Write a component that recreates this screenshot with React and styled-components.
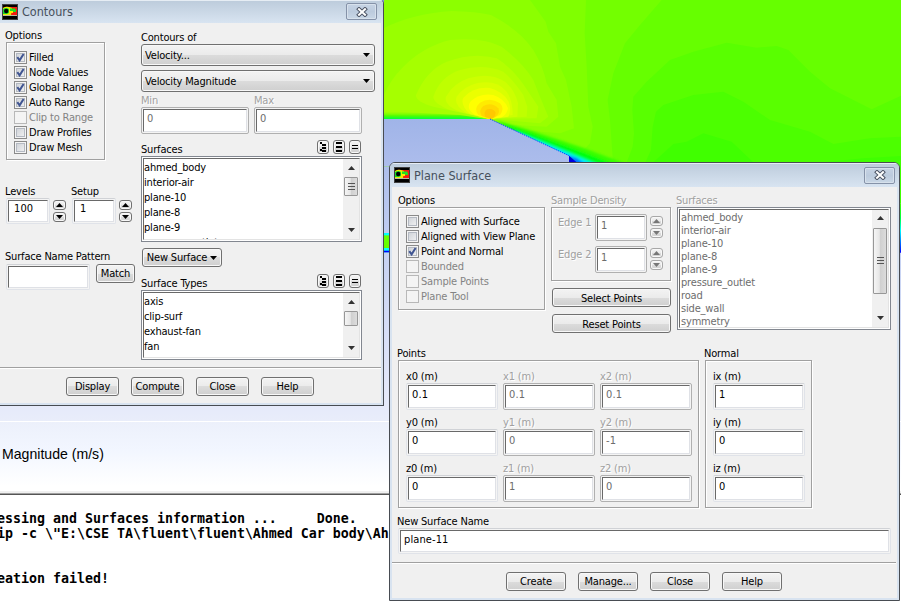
import React from 'react';
import styled, { createGlobalStyle, css } from 'styled-components';

const Global = createGlobalStyle`
  * { box-sizing: border-box; }
  body { margin: 0; overflow: hidden; background: #fff; }
  #root { font-family: 'DejaVu Sans Condensed', 'DejaVu Sans', Tahoma, sans-serif; font-stretch: condensed; font-size: 11px; line-height: 13px; color: #000; letter-spacing: -0.18px; }
`;

const Desktop = styled.div`
  position: relative; width: 901px; height: 602px; overflow: hidden; background: #fff;
`;
const Viewport = styled.div`
  height: 491px;
  background: linear-gradient(#8098dc 0, #a0b4e8 120px, #c6d2f3 260px, #e4e9fa 400px, #e9edfa 421px, #fff 421px, #fff 422px, #ecf0fb 422px, #f2f6ff 450px, #fff 486px);
`;
const Flow = styled.svg`position: absolute; left: 384px; top: 0; display: block;`;
const Legend = styled.div`
  position: absolute; left: 2px; top: 446px; font: 14.1px/17px 'Liberation Sans', Arial, sans-serif; letter-spacing: 0; white-space: nowrap;
`;
const Console = styled.pre`
  margin: 0; height: 111px; padding: 18px 0 0; border-top: 2px solid #f0f0f0; overflow: hidden;
  box-shadow: inset 0 1px #a0a0a0, inset 0 2px #555;
  font: bold 13.29px/15px 'DejaVu Sans Mono', monospace; letter-spacing: 0;
  & > span { display: block; margin-left: -3px; }
`;

const Window = styled.section`
  position: absolute; left: ${p => p.$x}px; top: ${p => p.$y}px; width: ${p => p.$w}px; height: ${p => p.$h}px;
  border: 1px solid #484c52; border-radius: ${p => (p.$cut ? '0 5px 0 0' : '6px 6px 0 0')};
  background: #d8e3f0; padding: 0 2px 2px ${p => (p.$cut ? 0 : 2)}px;
  ${p => p.$cut && css`border-left: 0; border-top-color: #b8c4d2;`}
  display: flex; flex-direction: column; overflow: hidden;
`;
const TitleBar = styled.header`
  flex: none; height: ${p => p.$h}px; margin: 0 -2px; padding: 0 4px 0 ${p => p.$pl}px; display: flex; align-items: center;
  background: linear-gradient(#bccbdb, #d8e4f1);
  box-shadow: inset 0 1px #e6edf4;
`;
const Title = styled.h1`
  margin: 1px auto 0 4px; font: 12.5px/16px 'DejaVu Sans Condensed', 'DejaVu Sans', sans-serif; font-stretch: condensed; letter-spacing: 0; color: #46505c;
`;
const CloseBox = styled.button`
  width: 31px; height: 17px; padding: 0; display: grid; place-items: center; border: 1px solid #8592a8; border-radius: 2px;
  background: linear-gradient(#c6d3e4, #bccbdd 50%, #c9d7e6); box-shadow: inset 0 0 0 1px #d7e1ec; margin-right: ${p => p.$mr || 0}px;
`;
const Body = styled.div`flex: 1; background: #f0f0f0; display: flex; flex-direction: column;`;
const Panel = styled.div`display: flex; height: ${p => p.$h}px; flex: none; padding-left: ${p => p.$pl}px;`;
const Column = styled.div`flex: none; width: ${p => p.$w}px; display: flex; flex-direction: column; align-items: flex-start;`;
const Row = styled.div`display: flex; align-items: flex-start; gap: ${p => p.$gap || 0}px; margin-top: ${p => p.$mt || 0}px; margin-left: ${p => p.$ml || 0}px; height: ${p => (p.$h ? p.$h + 'px' : 'auto')};`;

const Label = styled.div`
  flex: none; height: 13px; line-height: 13px; white-space: nowrap; margin-top: ${p => p.$mt || 0}px; margin-left: ${p => p.$ml || 0}px; width: ${p => (p.$w ? p.$w + 'px' : 'auto')};
  ${p => p.$off && css`color: #a0a0a0; text-shadow: 1px 1px #fff;`}
`;
const Group = styled.div`
  flex: none; width: ${p => p.$w}px; height: ${p => p.$h}px; margin-left: ${p => p.$ml || 0}px; padding: ${p => p.$p}; border: 1px solid #a0a0a0;
  box-shadow: 1px 1px #fff, inset 1px 1px #fff;
`;
const CheckRow = styled.label`
  display: flex; align-items: center; gap: 2px; height: 15px; white-space: nowrap; color: ${p => (p.$off ? '#838383' : '#000')};
`;
const CheckBox = styled.span`
  width: 13px; height: 13px; display: grid; place-items: center; border: 1px solid ${p => (p.$off ? '#b8b8b8' : '#8a8a8a')};
  background: ${p => (p.$off ? '#f4f4f4' : 'linear-gradient(135deg, #c9cdd3, #f6f6f6)')};
  box-shadow: inset 0 0 0 1px #f4f4f4, inset 0 0 0 2px ${p => (p.$off ? '#f4f4f4' : '#b4b9c2')};
`;
const FieldFrame = styled.div`
  flex: none; width: ${p => p.$w}px; height: ${p => p.$h || 27}px; padding: 1px; border: 1px solid ${p => (p.$off ? '#b0b0b0' : '#e0e3e9')}; border-radius: 2px; background: #f4f4f4;
  ${p => !p.$off && css`border-top-color: #d0d2d6;`}
`;
const FieldInner = styled.div`
  height: 100%; border: 1px solid; border-color: #696969 #dfe1e6 #dfe1e6 #696969; background: #fff; padding: 0 0 0 ${p => p.$pl || 3}px; line-height: ${p => p.$lh || 17}px;
  color: ${p => (p.$off ? '#6d6d6d' : '#000')}; white-space: nowrap; letter-spacing: 0.1px;
`;
const Btn = styled.button`
  flex: none; width: ${p => p.$w}px; height: ${p => p.$h || 19}px; margin: ${p => p.$m || 0}; padding: ${p => p.$p || 0}; display: flex; align-items: center; justify-content: ${p => p.$jc || 'center'}; gap: 3px;
  border: 1px solid ${p => (p.$off ? '#a8a8a8' : '#707070')}; border-radius: 3px; font: inherit; letter-spacing: inherit; color: #000; white-space: nowrap;
  background: linear-gradient(#f3f3f3, #ebebeb 50%, #dcdcdc 50%, #cfcfcf); box-shadow: inset 0 0 0 1px #f8f8f8;
`;
const Steps = styled.div`display: flex; flex-direction: column; gap: 2px; margin: 2px 0 0 3px;`;
const ListBox = styled.div`
  flex: none; display: flex; width: ${p => p.$w}px; height: ${p => p.$h}px; border: 1px solid #828790; background: #fff; padding: 1px;
`;
const ListInner = styled.div`flex: 1; display: flex; border: 1px solid; border-color: #696969 #e3e3e3 #e3e3e3 #696969; overflow: hidden;`;
const Items = styled.div`
  flex: 1; padding: ${p => p.$pt}px 0 0 ${p => p.$pl || 0}px; overflow: hidden; color: ${p => (p.$off ? '#6d6d6d' : '#000')};
  & > div { height: ${p => p.$rh}px; line-height: ${p => p.$rh}px; white-space: nowrap; }
`;
const ScrollBar = styled.div`
  width: 16px; background: #f0f0f0; display: flex; flex-direction: column; align-items: center; padding: ${p => p.$p};
`;
const Thumb = styled.div`
  width: 14px; height: ${p => p.$h}px; margin: ${p => p.$mt}px 0 auto; display: grid; place-items: center; border: 1px solid #979797; border-radius: 1px;
  background: linear-gradient(90deg, #f5f5f5, #e6e6e6 45%, #cfcfcf 50%, #dcdcdc);
`;
const Rule = styled.div`flex: none; height: 2px; margin-right: ${p => p.$mr || 0}px; background: linear-gradient(#a0a0a0 50%, #fff 50%);`;
const Footer = styled.footer`display: flex; gap: 12px; padding: 8px 0 0 ${p => p.$pl}px;`;
const Grid = styled.div`display: grid; grid-template-columns: repeat(${p => p.$n}, 92px); gap: 6px 5px;`;

const Arrow = ({ up, color = '#000', w = 7, h = 4 }) => (
  <svg width={w} height={h} viewBox="0 0 8 4" preserveAspectRatio="none"><path d={up ? 'M0 4L4 0L8 4Z' : 'M0 0L4 4L8 0Z'} fill={color} /></svg>
);
const AppIcon = () => (
  <svg width="16" height="16" viewBox="0 0 16 16">
    <rect width="16" height="16" fill="#404040" /><rect x="1" y="1" width="14" height="14" fill="#000" />
    <path d="M1 4q3-2 6-1h8v8H1z" fill="#f41a10" />
    <path d="M1 4q3-2 6-1l3 1-1 7H1z" fill="#e8f000" /><path d="M1 5q3-2 6 0v4L5 10H1z" fill="#16d828" />
    <circle cx="4.2" cy="7" r="2.2" fill="#000" /><path d="M8 4.5h5l1 1.5v2H8z" fill="#20e020" /><path d="M7 7h4v2H7z" fill="#ffe600" />
    <path d="M1 11h14v1H1z" fill="#b8b8a0" />
  </svg>
);
const CloseIcon = () => (
  <svg width="12" height="10" viewBox="0 0 12 10">
    <path d="M3 2.2L9 7.8M9 2.2L3 7.8" stroke="#4e5666" strokeWidth="4" strokeLinecap="square" />
    <path d="M3 2.2L9 7.8M9 2.2L3 7.8" stroke="#fff" strokeWidth="2" strokeLinecap="square" />
  </svg>
);
const CheckMark = () => (
  <svg width="9" height="9" viewBox="0 0 9 9"><path d="M1.3 4.2L3.6 7.4L7.6 1" fill="none" stroke="#405592" strokeWidth="2" /></svg>
);
const Check = ({ on, off, children }) => (
  <CheckRow $off={off}><CheckBox $off={off}>{on && <CheckMark />}</CheckBox>{children}</CheckRow>
);
const Field = ({ w, h, off, lh, pl, children }) => (
  <FieldFrame $w={w} $h={h} $off={off}><FieldInner $off={off} $lh={lh} $pl={pl}>{children}</FieldInner></FieldFrame>
);
const Spinner = ({ off }) => (
  <Steps>
    <Btn $w={13} $h={10} $off={off}><Arrow up color={off ? '#777' : '#000'} /></Btn>
    <Btn $w={13} $h={10} $off={off}><Arrow color={off ? '#777' : '#000'} /></Btn>
  </Steps>
);
const listIcons = ['M2 1h2v2H2zM4 3h4v2H4zM4 6h4v2H4zM2 8h2v2H2zM4 9h4v2H4z', 'M2 1h6v2H2zM2 5h6v2H2zM2 9h6v2H2z', 'M2 4h6v1H2zM2 7h6v1H2z'];
const ListTools = () => listIcons.map(d => (
  <Btn key={d} $w={12} $h={14}><svg width="10" height="12" viewBox="0 0 10 12"><path d={d} fill="#000" /></svg></Btn>
));
const Grip = () => <svg width="7" height="8" viewBox="0 0 7 8"><path d="M0 .5h7M0 3.5h7M0 6.5h7" stroke="#555" /></svg>;

const List = ({ w, h, rh, pt, pl, off, items, thumb, gap, grip, sp }) => (
  <ListBox $w={w} $h={h}><ListInner>
    <Items $rh={rh} $pt={pt} $pl={pl} $off={off}>{items.map(t => <div key={t}>{t}</div>)}</Items>
    <ScrollBar $p={sp}><Arrow up color="#333" /><Thumb $h={thumb} $mt={gap}>{grip && <Grip />}</Thumb><Arrow color="#333" /></ScrollBar>
  </ListInner></ListBox>
);
const Select = ({ children, m }) => <Btn $w={234} $h={22} $jc="space-between" $p="0 4px 0 3px" $m={m}>{children}<Arrow /></Btn>;

const bands = [
  ['#73ff00', 'M12 0H845L780 75L735 130L700 220L683 300L690 360L700 500H12Z'],
  ['#80ff00', 'M12 0H618L614 100L620 200L625 320L638 380L630 430L560 500H12Z'],
  ['#8cff00', 'M12 0H450L497 65L505 95L528 130L540 200L558 240L575 320L582 385L540 400L12 357Z'],
  ['#99ff00', 'M12 84Q100 40 215 33Q290 35 333 45Q420 90 460 150Q490 200 500 250L530 300L535 350L500 380L12 357Z'],
  ['#a6ff00', 'M12 285Q30 240 70 200Q130 140 210 120Q310 110 365 140Q430 190 460 240L480 290L505 350L480 370L330 357L12 345Z'],
  ['#b3ff00', 'M160 320Q106 305 108 285Q140 210 200 185Q280 155 350 175Q400 205 445 275L475 320L470 355L330 357Z'],
  ['#bfff00', 'M210 330Q160 310 160 290Q180 230 240 210Q310 190 370 215Q400 240 430 285L442 320L440 350L330 357Z'],
  ['#ccff00', 'M240 335Q190 315 198 290Q220 250 265 235Q330 215 375 245Q405 270 414 310L412 350L330 357Z'],
  ['#d9ff00', 'M260 340Q220 315 230 290Q250 260 290 250Q350 238 380 275Q398 300 398 345L330 357Z'],
  ['#ebff00', 'M270 342Q240 315 250 293Q280 260 330 264Q370 275 386 305Q395 330 385 350L330 357Z'],
  ['#ffff00', 'M285 345Q255 325 273 303Q300 278 340 285Q375 297 384 325Q380 345 365 352L330 357Z'],
  ['#ffec00', 'M295 345Q280 325 300 308Q330 290 360 310Q375 325 360 345L330 357Z'],
  ['#ffd900', 'M305 348Q295 330 310 318Q335 305 355 325Q362 340 345 352L330 357Z'],
  ['#ffc800', 'M315 350Q310 335 322 328Q340 323 347 338Q345 352 335 357Z'],
  ['#59ff00', 'M760 290L800 245L870 180L940 155L1040 128L1130 143L1190 138L1225 150L1290 215L1350 265L1475 328L1563 287V500H735L758 440L762 400L757 330Z'],
  ['#4cff00', 'M828 335L850 315L940 285L1030 275L1090 305L1170 360L1290 395L1360 432L1470 415L1563 410V500H790L813 450L818 380Z'],
  ['#40ff00', 'M820 487L880 432L920 425L970 400L1055 425L1120 487Z'],
  ['#40ff00', 'M1330 487L1450 475L1563 468V500H1330Z'],
];
const FlowField = () => (
  <Flow width="517" height="260" viewBox="12 0 1551 780">
    <defs>
      <linearGradient id="wall" x1="0" y1="0" x2="0" y2="1"><stop offset="0" stopColor="#8cff00" stopOpacity="0" /><stop offset=".6" stopColor="#50ff00" /><stop offset="1" stopColor="#00ff40" /></linearGradient>
      <linearGradient id="edge" x1="0" y1="0" x2="0" y2="1"><stop offset="0" stopColor="#40ff00" /><stop offset=".3" stopColor="#00ff40" /><stop offset=".55" stopColor="#00ffff" /><stop offset="1" stopColor="#0000ff" /></linearGradient>
      <linearGradient id="body" x1="0" y1="0" x2="0" y2="1"><stop offset="0" stopColor="#a0b4e8" /><stop offset="1" stopColor="#adbdec" /></linearGradient>
      <filter id="soft"><feGaussianBlur stdDeviation="3" /></filter>
    </defs>
    <path d="M12 0H1563V500H12Z" fill="#66ff00" />
    {bands.map(([fill, d]) => <path key={d} d={d} fill={fill} />)}
    <path d="M12 333L240 345L320 357H12Z" fill="url(#wall)" />
    <g filter="url(#soft)">
      <path d="M345 360L440 388L600 440L740 492H560Z" fill="#38ff00" />
      <path d="M355 366L460 402L600 453L700 492H560Z" fill="#00ff10" />
      <path d="M400 390L480 421L570 457L655 492H560Z" fill="#00ffa0" />
      <path d="M400 392L480 425L570 462L640 492H560Z" fill="#00e8ff" />
      <path d="M567 467L590 474L615 492H560Z" fill="#0080ff" />
    </g>
    <path d="M567 467L590 487H567Z" fill="#0000e0" />
    <path d="M12 357H330L567 467V500H12Z" fill="url(#body)" />
    <path d="M330 357L567 467" stroke="#0048ff" strokeWidth="3" strokeDasharray="4 3" />
    <path d="M1557 500H1563V610H1557Z" fill="#40ff00" />
    <path d="M1557 610H1563V758H1557Z" fill="url(#edge)" />
    <path d="M12 699H40V757H12Z" fill="#00ffff" />
    <path d="M12 706H40V744H12Z" fill="#66ff00" />
    <path d="M12 752H40V757H12Z" fill="#0000ff" />
  </Flow>
);

const ContoursWindow = () => (
  <Window $x={0} $y={-1} $w={384} $h={407} $cut>
    <TitleBar $h={23} $pl={4}><AppIcon /><Title>Contours</Title><CloseBox $mr={2}><CloseIcon /></CloseBox></TitleBar>
    <Body>
      <Panel $pl={5} $h={344}>
        <Column $w={136}>
          <Label $mt={6}>Options</Label>
          <Group $w={99} $h={118} $ml={1} $p="7px 0 0 7px">
            <Check on>Filled</Check><Check on>Node Values</Check><Check on>Global Range</Check><Check on>Auto Range</Check>
            <Check off>Clip to Range</Check><Check>Draw Profiles</Check><Check>Draw Mesh</Check>
          </Group>
          <Row $mt={25}><Label $w={66}>Levels</Label><Label>Setup</Label></Row>
          <Row $ml={1}>
            <Field w={44} h={26} lh={16} pl={5}>100</Field><Spinner />
            <Row $ml={6}><Field w={44} h={26} lh={16} pl={5}>1</Field><Spinner /></Row>
          </Row>
          <Label $mt={26}>Surface Name Pattern</Label>
          <Row $mt={1} $gap={6} $ml={1}><Field w={84} h={26} /><Btn $w={39}>Match</Btn></Row>
        </Column>
        <Column $w={234}>
          <Label $mt={8}>Contours of</Label>
          <Select>Velocity...</Select>
          <Select m="4px 0 0">Velocity Magnitude</Select>
          <Row $mt={2} $gap={5}><Label $off $w={108}>Min</Label><Label $off>Max</Label></Row>
          <Row $gap={5}><Field w={108} off>0</Field><Field w={108} off>0</Field></Row>
          <Row $mt={6} $gap={4} $h={16}><Label $w={172} $mt={3}>Surfaces</Label><ListTools /></Row>
          <List w={221} h={86} rh={15} pt={1} items={['ahmed_body', 'interior-air', 'plane-10', 'plane-8', 'plane-9', 'pressure_outlet']} thumb={19} gap={7} grip sp="7px 0" />
          <Btn $w={80} $m="6px 0 0 1px">New Surface<Arrow /></Btn>
          <Row $mt={7} $gap={4} $h={16}><Label $w={172} $mt={3}>Surface Types</Label><ListTools /></Row>
          <List w={221} h={70} rh={15} pt={1} items={['axis', 'clip-surf', 'exhaust-fan', 'fan', 'fluid']} thumb={15} gap={7} sp="7px 0" />
        </Column>
      </Panel>
      <Rule />
      <Footer $pl={66}><Btn $w={53}>Display</Btn><Btn $w={53}>Compute</Btn><Btn $w={53}>Close</Btn><Btn $w={53}>Help</Btn></Footer>
    </Body>
  </Window>
);

const Cell = ({ name, value, off }) => (
  <div><Label $off={off}>{name}</Label><Field w={92} off={off}>{value}</Field></div>
);
const PlaneWindow = () => (
  <Window $x={389} $y={162} $w={511} $h={439}>
    <TitleBar $h={24} $pl={4}><AppIcon /><Title>Plane Surface</Title><CloseBox><CloseIcon /></CloseBox></TitleBar>
    <Body>
      <Panel $pl={6} $h={160}>
        <Column $w={153}>
          <Label $mt={7}>Options</Label>
          <Group $w={147} $h={103} $p="6px 0 0 7px">
            <Check>Aligned with Surface</Check><Check>Aligned with View Plane</Check><Check on>Point and Normal</Check>
            <Check off>Bounded</Check><Check off>Sample Points</Check><Check off>Plane Tool</Check>
          </Group>
        </Column>
        <Column $w={126}>
          <Label $mt={7} $off>Sample Density</Label>
          <Row><Group $w={120} $h={74} $p="6px 0 0 6px">
            <Row><Label $off $w={37} $mt={2}>Edge 1</Label><Field w={52} off>1</Field><Spinner off /></Row>
            <Row $mt={5}><Label $off $w={37} $mt={2}>Edge 2</Label><Field w={52} off>1</Field><Spinner off /></Row>
          </Group></Row>
          <Btn $w={119} $m="7px 0 0 1px" $p="1px 0 0">Select Points</Btn>
          <Btn $w={119} $m="7px 0 0 1px" $p="1px 0 0">Reset Points</Btn>
        </Column>
        <Column $w={214}>
          <Label $mt={7} $ml={-1} $off>Surfaces</Label>
          <List w={214} h={123} rh={13} pt={1} pl={1} off items={['ahmed_body', 'interior-air', 'plane-10', 'plane-8', 'plane-9', 'pressure_outlet', 'road', 'side_wall', 'symmetry']} thumb={66} gap={8} grip sp="6px 0 7px" />
        </Column>
      </Panel>
      <Panel $pl={6} $h={161}>
        <Column $w={307}>
          <Label $ml={-1}>Points</Label>
          <Group $w={301} $h={148} $p="9px 0 0 7px"><Grid $n={3}>
            <Cell name="x0 (m)" value="0.1" /><Cell off name="x1 (m)" value="0.1" /><Cell off name="x2 (m)" value="0.1" />
            <Cell name="y0 (m)" value="0" /><Cell off name="y1 (m)" value="0" /><Cell off name="y2 (m)" value="-1" />
            <Cell name="z0 (m)" value="0" /><Cell off name="z1 (m)" value="1" /><Cell off name="z2 (m)" value="0" />
          </Grid></Group>
        </Column>
        <Column $w={107}>
          <Label $ml={-1}>Normal</Label>
          <Group $w={107} $h={148} $p="9px 0 0 7px"><Grid $n={1}>
            <Cell name="ix (m)" value="1" /><Cell name="iy (m)" value="0" /><Cell name="iz (m)" value="0" />
          </Grid></Group>
        </Column>
      </Panel>
      <Panel $pl={6} $h={54}>
        <Column $w={493}>
          <Label $mt={7} $ml={-1}>New Surface Name</Label>
          <Field w={493} h={26}>plane-11</Field>
        </Column>
      </Panel>
      <Rule $mr={1} />
      <Footer $pl={114}><Btn $w={60}>Create</Btn><Btn $w={60}>Manage...</Btn><Btn $w={60}>Close</Btn><Btn $w={60}>Help</Btn></Footer>
    </Body>
  </Window>
);

export default function App() {
  return (
    <Desktop>
      <Global />
      <Viewport />
      <Console>
        <span>essing and Surfaces information ...     Done.</span>
        <span>{'ip -c \\"E:\\CSE TA\\fluent\\fluent\\Ahmed Car body\\Ah'}</span>
        <span>&nbsp;</span>
        <span>&nbsp;</span>
        <span>eation failed!</span>
      </Console>
      <FlowField />
      <Legend>Magnitude (m/s)</Legend>
      <ContoursWindow />
      <PlaneWindow />
    </Desktop>
  );
}
